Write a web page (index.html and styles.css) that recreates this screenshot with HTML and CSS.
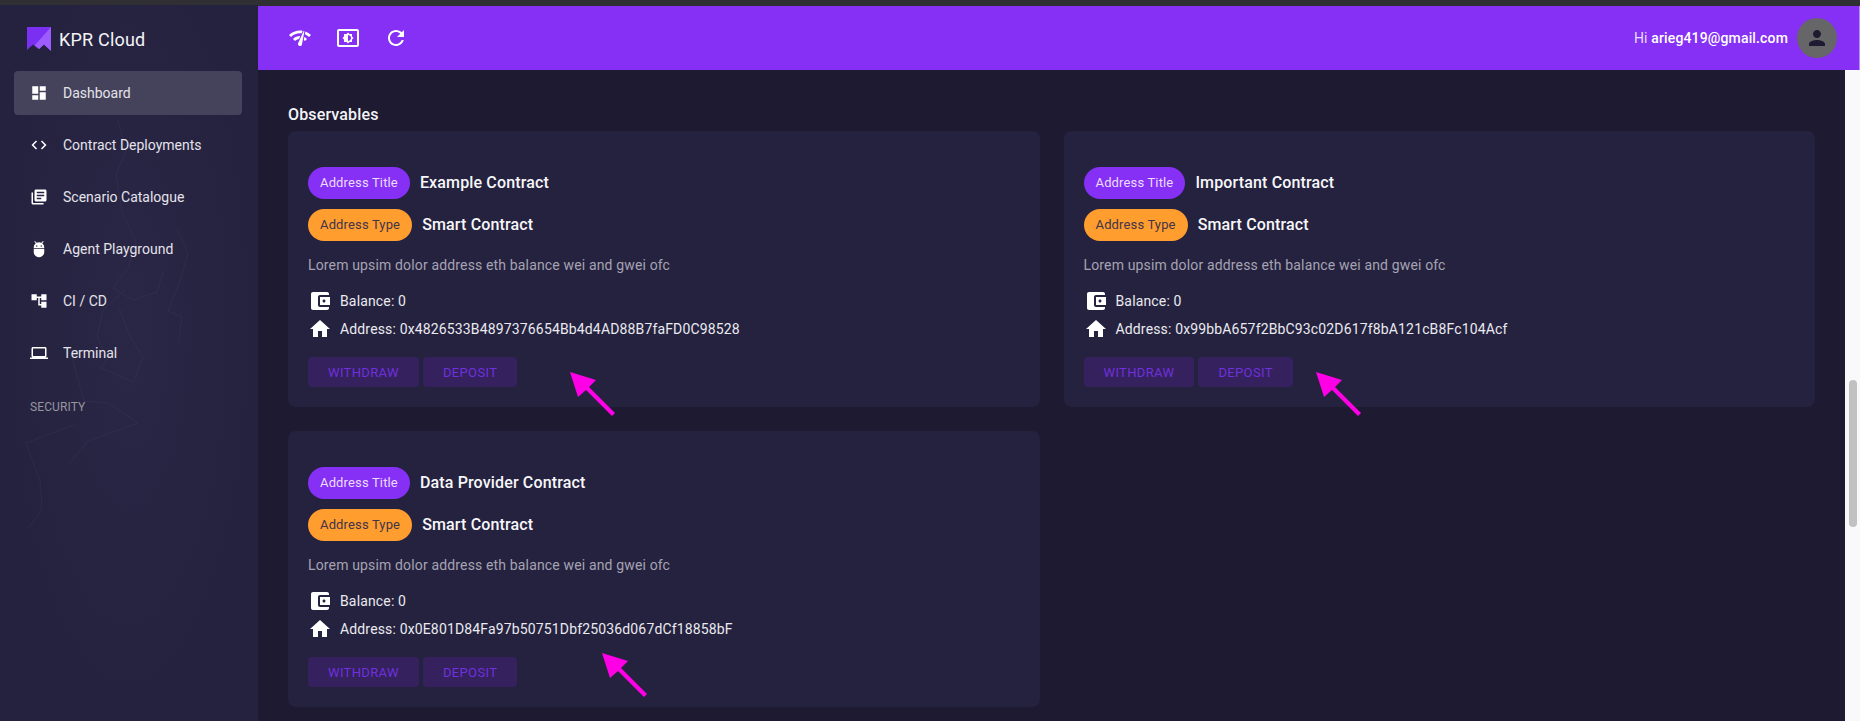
FILE: index.html
```html
<!DOCTYPE html>
<html lang="en">
<head>
    <meta charset="UTF-8">
    <meta name="viewport" content="width=device-width, initial-scale=1.0">
    <title>KPR Cloud</title>
    <link rel="stylesheet" href="styles.css">
</head>
<body>
<div class="top-strip"></div>
<div class="shell">
    <aside class="sidebar">
        <svg class="sidebar-texture" viewBox="0 0 258 716" width="258" height="716" fill="none" stroke="#ffffff" stroke-width="1">
            <path d="M118 115l8 32-10 22 6 38 14 30-8 26-15 20 20 12 24-8 6-20"/>
            <path d="M176 224l12 24-8 28-12 30 14 6-4 26"/>
            <path d="M125 285l-22 20-6 26 10 22-6 10 32 14 10-24-14-24-10-26"/>
            <path d="M72 352l12 44 24 2 30 20-50 18-20 24"/>
            <path d="M74 420l-48 18 14 38 2 28-14 20"/>
        </svg>
        <div class="brand">
            <svg class="brand-logo" viewBox="0 0 24 24" width="24" height="24">
                <polygon fill="#7b2ff2" points="0,0 24,0 24,24 17,17.5 12,22 6,17.5 0,23"/>
                <polygon fill="#9c5cff" points="24,0 24,24 17,17.5 12,22 7.5,18.6"/>
            </svg>
            <span>KPR Cloud</span>
        </div>
        <nav class="nav">
            <a class="nav-item active">
                <svg class="nav-icon" viewBox="0 0 24 24"><path d="M3 13h8V3H3v10zm0 8h8v-6H3v6zm10 0h8V11h-8v10zm0-18v6h8V3h-8z"/></svg>
                Dashboard
            </a>
            <a class="nav-item">
                <svg class="nav-icon" viewBox="0 0 24 24"><path d="M9.4 16.6L4.8 12l4.6-4.6L8 6l-6 6 6 6 1.4-1.4zm5.2 0l4.6-4.6-4.6-4.6L16 6l6 6-6 6-1.4-1.4z"/></svg>
                Contract Deployments
            </a>
            <a class="nav-item">
                <svg class="nav-icon" viewBox="0 0 24 24"><path d="M4 6H2v14c0 1.1.9 2 2 2h14v-2H4V6zm16-4H8c-1.1 0-2 .9-2 2v12c0 1.1.9 2 2 2h12c1.1 0 2-.9 2-2V4c0-1.1-.9-2-2-2zm-1 9H9V9h10v2zm-4 4H9v-2h6v2zm4-8H9V5h10v2z"/></svg>
                Scenario Catalogue
            </a>
            <a class="nav-item">
                <svg class="nav-icon" viewBox="0 0 24 24"><path d="M5 16c0 3.87 3.13 7 7 7s7-3.13 7-7v-4H5v4zM16.12 4.37l2.1-2.1-.82-.83-2.3 2.31C14.16 3.28 13.12 3 12 3s-2.16.28-3.09.75L6.6 1.44l-.82.83 2.1 2.1C6.14 5.64 5 7.68 5 10v1h14v-1c0-2.32-1.14-4.36-2.88-5.63zM9 9c-.55 0-1-.45-1-1s.45-1 1-1 1 .45 1 1-.45 1-1 1zm6 0c-.55 0-1-.45-1-1s.45-1 1-1 1 .45 1 1-.45 1-1 1z"/></svg>
                Agent Playground
            </a>
            <a class="nav-item">
                <svg class="nav-icon" viewBox="0 0 24 24"><path d="M22 11V3h-7v3H9V3H2v8h7V8h2v10h4v3h7v-8h-7v3h-2V8h2v3z"/></svg>
                CI / CD
            </a>
            <a class="nav-item">
                <svg class="nav-icon" viewBox="0 0 24 24"><path d="M20 18c1.1 0 1.99-.9 1.99-2L22 6c0-1.1-.9-2-2-2H4c-1.1 0-2 .9-2 2v10c0 1.1.9 2 2 2H0v2h24v-2h-4zM4 6h16v10H4V6z"/></svg>
                Terminal
            </a>
        </nav>
        <div class="nav-section">Security</div>
    </aside>

    <div class="content">
        <header class="topbar">
            <svg class="topbar-icon" viewBox="0 0 24 24"><path d="M15.9 5c-.17 0-.32.09-.41.23l-.07.15-5.18 11.65c-.16.29-.26.61-.26.96 0 1.11.9 2.01 2.01 2.01.96 0 1.77-.68 1.96-1.59l.01-.03L16.4 5.5c0-.28-.22-.5-.5-.5zM1 9l2 2c2.88-2.88 6.79-4.07 10.53-3.59l1.2-2.71C9.89 3.84 4.74 5.27 1 9zm20 2l2-2c-1.64-1.64-3.55-2.82-5.59-3.57l-.53 2.82c1.5.62 2.9 1.53 4.12 2.75zm-4 4l2-2c-.8-.8-1.7-1.42-2.66-1.89l-.55 2.92c.42.27.83.59 1.21.97zM5 13l2 2c1.13-1.13 2.56-1.79 4.03-2l1.28-2.88c-2.63-.08-5.3.87-7.31 2.88z"/></svg>
            <svg class="topbar-icon" viewBox="0 0 24 24"><path d="M21 3H3c-1.1 0-2 .9-2 2v14c0 1.1.9 2 2 2h18c1.1 0 2-.9 2-2V5c0-1.1-.9-2-2-2zm0 16.01H3V4.99h18v14.02zM8 16h2.5l1.5 1.5 1.5-1.5H16v-2.5l1.5-1.5-1.5-1.5V8h-2.5L12 6.5 10.5 8H8v2.5L6.5 12 8 13.5V16zm4-7c1.66 0 3 1.34 3 3s-1.34 3-3 3V9z"/></svg>
            <svg class="topbar-icon" viewBox="0 0 24 24"><path d="M17.65 6.35C16.2 4.9 14.21 4 12 4c-4.42 0-7.99 3.58-7.99 8s3.57 8 7.99 8c3.73 0 6.84-2.55 7.73-6h-2.08c-.82 2.33-3.04 4-5.65 4-3.31 0-6-2.69-6-6s2.69-6 6-6c1.66 0 3.14.69 4.22 1.78L13 11h7V4l-2.35 2.35z"/></svg>
            <div class="user">
                <span class="user-hi">Hi <b>arieg419@gmail.com</b></span>
                <div class="avatar">
                    <svg viewBox="0 0 24 24" width="24" height="24"><path d="M12 12c2.21 0 4-1.79 4-4s-1.79-4-4-4-4 1.79-4 4 1.79 4 4 4zm0 2c-2.67 0-8 1.34-8 4v2h16v-2c0-2.66-5.33-4-8-4z"/></svg>
                </div>
            </div>
        </header>

        <div class="below-topbar">
            <main class="main">
                <h2 class="section-title">Observables</h2>
                <div class="cards">
                    <section class="card">
                        <div class="label-row"><span class="pill pill-title">Address Title</span><span class="label-value">Example Contract</span></div>
                        <div class="label-row"><span class="pill pill-type">Address Type</span><span class="label-value">Smart Contract</span></div>
                        <p class="card-desc">Lorem upsim dolor address eth balance wei and gwei ofc</p>
                        <div class="info-row">
                            <svg class="info-icon" viewBox="0 0 24 24"><path d="M21 18v1c0 1.1-.9 2-2 2H5c-1.11 0-2-.9-2-2V5c0-1.1.89-2 2-2h14c1.1 0 2 .9 2 2v1h-9c-1.11 0-2 .9-2 2v8c0 1.1.89 2 2 2h9zm-9-2h10V8H12v8zm4-2.5c-.83 0-1.5-.67-1.5-1.5s.67-1.5 1.5-1.5 1.5.67 1.5 1.5-.67 1.5-1.5 1.5z"/></svg>
                            Balance: 0
                        </div>
                        <div class="info-row">
                            <svg class="info-icon" viewBox="0 0 24 24"><path d="M10 20v-6h4v6h5v-8h3L12 3 2 12h3v8z"/></svg>
                            Address: 0x4826533B4897376654Bb4d4AD88B7faFD0C98528
                        </div>
                        <div class="card-actions">
                            <button class="btn">Withdraw</button>
                            <button class="btn">Deposit</button>
                        </div>
                        <svg class="arrow arrow-first" viewBox="0 0 50 50" width="50" height="50"><path d="M2 2L28 10 21 17 47 43 44 46 18 20 10 27z"/></svg>
                    </section>

                    <section class="card">
                        <div class="label-row"><span class="pill pill-title">Address Title</span><span class="label-value">Important Contract</span></div>
                        <div class="label-row"><span class="pill pill-type">Address Type</span><span class="label-value">Smart Contract</span></div>
                        <p class="card-desc">Lorem upsim dolor address eth balance wei and gwei ofc</p>
                        <div class="info-row">
                            <svg class="info-icon" viewBox="0 0 24 24"><path d="M21 18v1c0 1.1-.9 2-2 2H5c-1.11 0-2-.9-2-2V5c0-1.1.89-2 2-2h14c1.1 0 2 .9 2 2v1h-9c-1.11 0-2 .9-2 2v8c0 1.1.89 2 2 2h9zm-9-2h10V8H12v8zm4-2.5c-.83 0-1.5-.67-1.5-1.5s.67-1.5 1.5-1.5 1.5.67 1.5 1.5-.67 1.5-1.5 1.5z"/></svg>
                            Balance: 0
                        </div>
                        <div class="info-row">
                            <svg class="info-icon" viewBox="0 0 24 24"><path d="M10 20v-6h4v6h5v-8h3L12 3 2 12h3v8z"/></svg>
                            Address: 0x99bbA657f2BbC93c02D617f8bA121cB8Fc104Acf
                        </div>
                        <div class="card-actions">
                            <button class="btn">Withdraw</button>
                            <button class="btn">Deposit</button>
                        </div>
                        <svg class="arrow arrow-second" viewBox="0 0 50 50" width="50" height="50"><path d="M2 2L28 10 21 17 47 43 44 46 18 20 10 27z"/></svg>
                    </section>

                    <section class="card">
                        <div class="label-row"><span class="pill pill-title">Address Title</span><span class="label-value">Data Provider Contract</span></div>
                        <div class="label-row"><span class="pill pill-type">Address Type</span><span class="label-value">Smart Contract</span></div>
                        <p class="card-desc">Lorem upsim dolor address eth balance wei and gwei ofc</p>
                        <div class="info-row">
                            <svg class="info-icon" viewBox="0 0 24 24"><path d="M21 18v1c0 1.1-.9 2-2 2H5c-1.11 0-2-.9-2-2V5c0-1.1.89-2 2-2h14c1.1 0 2 .9 2 2v1h-9c-1.11 0-2 .9-2 2v8c0 1.1.89 2 2 2h9zm-9-2h10V8H12v8zm4-2.5c-.83 0-1.5-.67-1.5-1.5s.67-1.5 1.5-1.5 1.5.67 1.5 1.5-.67 1.5-1.5 1.5z"/></svg>
                            Balance: 0
                        </div>
                        <div class="info-row">
                            <svg class="info-icon" viewBox="0 0 24 24"><path d="M10 20v-6h4v6h5v-8h3L12 3 2 12h3v8z"/></svg>
                            Address: 0x0E801D84Fa97b50751Dbf25036d067dCf18858bF
                        </div>
                        <div class="card-actions">
                            <button class="btn">Withdraw</button>
                            <button class="btn">Deposit</button>
                        </div>
                        <svg class="arrow arrow-third" viewBox="0 0 50 50" width="50" height="50"><path d="M2 2L28 10 21 17 47 43 44 46 18 20 10 27z"/></svg>
                    </section>
                </div>
            </main>
            <div class="scrollbar"><div class="scrollbar-thumb"></div></div>
        </div>
    </div>
</div>
</body>
</html>
```

FILE: styles.css
```css
* {
    box-sizing: border-box;
}

html,
body {
    margin: 0;
    height: 100%;
    overflow: hidden;
}

body {
    font-family: Roboto, "Liberation Sans", sans-serif;
    font-size: 14px;
    letter-spacing: 0.15px;
    color: #ffffff;
    background-color: #f9f9fb;
    display: flex;
    flex-direction: column;
}

.top-strip {
    height: 5px;
    background-color: #303034;
    flex-shrink: 0;
}

.shell {
    flex: 1;
    display: flex;
    min-height: 0;
}

/* sidebar */
.sidebar {
    position: relative;
    width: 258px;
    flex-shrink: 0;
    padding: 22px 16px 0 14px;
    background-color: #25223f;
    background-image: radial-gradient(ellipse at 50% 45%, #2a2646 0%, #25223f 70%);
    overflow: hidden;
}

.sidebar-texture {
    position: absolute;
    top: 0;
    left: 0;
    opacity: 0.03;
}

.brand {
    position: relative;
    display: flex;
    align-items: center;
    gap: 8px;
    height: 24px;
    margin: 0 0 20px 13px;
    font-size: 18px;
    letter-spacing: 0.2px;
    color: #f4f4f7;
}

.brand-logo {
    flex-shrink: 0;
}

.nav {
    position: relative;
    display: flex;
    flex-direction: column;
    gap: 8px;
}

.nav-item {
    display: flex;
    align-items: center;
    gap: 15px;
    height: 44px;
    padding-left: 16px;
    border-radius: 4px;
    letter-spacing: 0;
    color: #e4e3ea;
}

.nav-item.active {
    background-color: #45425b;
}

.nav-icon {
    width: 18px;
    height: 18px;
    fill: #ffffff;
    flex-shrink: 0;
}

.nav-section {
    position: relative;
    margin: 24px 0 0 16px;
    font-size: 12px;
    line-height: 16px;
    letter-spacing: 0.1px;
    text-transform: uppercase;
    color: #97959f;
}

/* top bar */
.content {
    flex: 1;
    min-width: 0;
    display: flex;
    flex-direction: column;
    background-color: #303034;
}

.topbar {
    display: flex;
    align-items: center;
    gap: 24px;
    height: 64px;
    margin-top: 1px;
    padding: 0 22px 0 30px;
    border-right: 1px solid #b98cf9;
    background-color: #8630f5;
    flex-shrink: 0;
}

.topbar-icon {
    width: 24px;
    height: 24px;
    fill: #ffffff;
    flex-shrink: 0;
}

.user {
    margin-left: auto;
    display: flex;
    align-items: center;
    gap: 9px;
}

.user-hi {
    color: #eadcff;
}

.user-hi b {
    font-weight: 500;
    color: #ffffff;
}

.avatar {
    width: 40px;
    height: 40px;
    border-radius: 50%;
    background-color: #666668;
    display: flex;
    align-items: center;
    justify-content: center;
    fill: #1d1a32;
}

/* main area */
.below-topbar {
    flex: 1;
    min-height: 0;
    display: flex;
}

.main {
    flex: 1;
    min-width: 0;
    padding: 35px 30px 0;
    background-color: #1d1a32;
}

.section-title {
    margin: 0 0 6px;
    font-size: 16px;
    font-weight: 500;
    line-height: 20px;
    color: #f4f4f7;
}

.cards {
    display: grid;
    grid-template-columns: 1fr 1fr;
    gap: 24px;
}

.card {
    position: relative;
    height: 276px;
    padding: 36px 20px 20px;
    border-radius: 8px;
    background-color: #25223f;
}

.label-row {
    display: flex;
    align-items: center;
    gap: 10px;
    margin-bottom: 10px;
}

.pill {
    height: 32px;
    padding: 0 12px 2px;
    border-radius: 16px;
    display: flex;
    align-items: center;
    font-size: 13px;
    letter-spacing: 0.15px;
}

.pill-title {
    background-color: #8630f5;
    color: #ecdcff;
}

.pill-type {
    background-color: #ff9d2f;
    color: #433448;
}

.label-value {
    padding-bottom: 2px;
    font-size: 16px;
    font-weight: 500;
    color: #f7f7fa;
}

.card-desc {
    margin: 14px 0 14px;
    line-height: 20px;
    color: #a5a3b3;
}

.info-row {
    display: flex;
    align-items: center;
    gap: 8px;
    height: 24px;
    margin-bottom: 4px;
    color: #eaeaef;
}

.info-icon {
    width: 24px;
    height: 24px;
    fill: #ffffff;
    flex-shrink: 0;
}

.card-actions {
    display: flex;
    gap: 4px;
    margin-top: 16px;
}

.btn {
    height: 30px;
    padding: 0 20px;
    border: none;
    border-radius: 4px;
    background-color: #34215e;
    color: #7030dc;
    font-family: inherit;
    font-size: 13px;
    letter-spacing: 0.36px;
    text-transform: uppercase;
}

/* pink annotation arrows */
.arrow {
    position: absolute;
    fill: #ff00e6;
}

.arrow-first {
    left: 280px;
    top: 239px;
}

.arrow-second {
    left: 250px;
    top: 239px;
}

.arrow-third {
    left: 312px;
    top: 220px;
}

/* scrollbar */
.scrollbar {
    width: 15px;
    flex-shrink: 0;
    padding: 310px 3px 0 4px;
    background-color: #f9f9fb;
}

.scrollbar-thumb {
    height: 147px;
    border-radius: 4px;
    background-color: #c1c1c1;
}
```
